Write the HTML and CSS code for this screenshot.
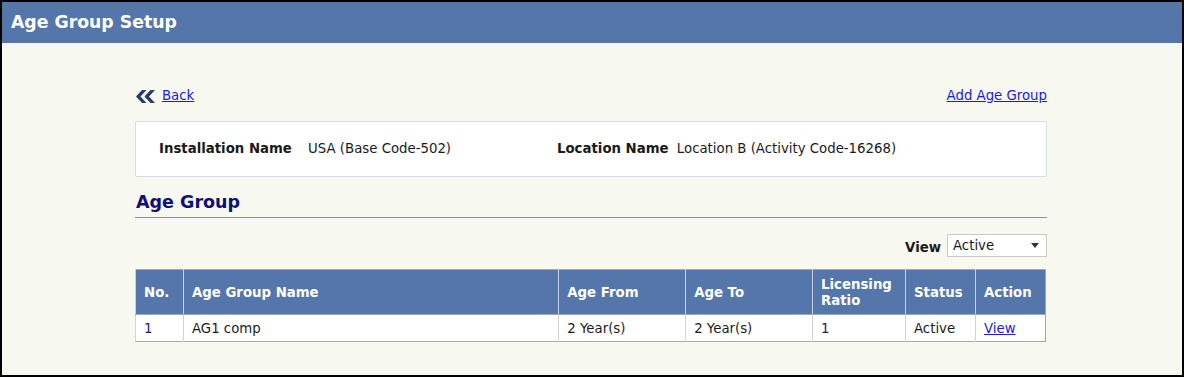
FILE: index.html
```html
<!DOCTYPE html>
<html lang="en">
<head>
  <meta charset="UTF-8" />
  <title>Age Group Setup</title>
  <link rel="stylesheet" href="styles.css">
</head>
<body>
  <div class="page">
    <div class="pageHeader">Age Group Setup</div>

    <div class="content">
      <div class="topLinks">
        <a href="#" class="backLink">
          <svg class="backIcon" width="20" height="13" viewBox="0 0 20 13">
            <polygon points="0,6.5 6,0 10.5,0 4.5,6.5 10.5,13 6,13" />
            <polygon points="8.5,6.5 14.5,0 19,0 13,6.5 19,13 14.5,13" />
          </svg>
          <span>Back</span>
        </a>
        <a href="#">Add Age Group</a>
      </div>

      <div class="infoBox">
        <div class="infoItem first">
          <span class="infoLabel">Installation Name</span>
          <span class="infoValue">USA (Base Code-502)</span>
        </div>
        <div class="infoItem">
          <span class="infoLabel">Location Name</span>
          <span class="infoValue">Location B (Activity Code-16268)</span>
        </div>
      </div>

      <h2 class="sectionTitle">Age Group</h2>

      <div class="filterRow">
        <label for="viewSelect">View</label>
        <div class="selectWrap">
          <select id="viewSelect">
            <option>Active</option>
            <option>Inactive</option>
            <option>All</option>
          </select>
        </div>
      </div>

      <table class="grid">
        <thead>
          <tr>
            <th class="colNo">No.</th>
            <th class="colName">Age Group Name</th>
            <th class="colFrom">Age From</th>
            <th class="colTo">Age To</th>
            <th class="colRatio">Licensing Ratio</th>
            <th class="colStatus">Status</th>
            <th class="colAction">Action</th>
          </tr>
        </thead>
        <tbody>
          <tr>
            <td class="num">1</td>
            <td>AG1 comp</td>
            <td>2 Year(s)</td>
            <td>2 Year(s)</td>
            <td class="num">1</td>
            <td>Active</td>
            <td><a href="#">View</a></td>
          </tr>
        </tbody>
      </table>
    </div>
  </div>
</body>
</html>
```

FILE: styles.css
```css
/* Basic Reset */
* {
  box-sizing: border-box;
  margin: 0;
  padding: 0;
}
body {
  font-family: "DejaVu Sans", Verdana, sans-serif;
  font-size: 13.3px;
  color: #1a1a1a;
  background-color: #fff;
}
.page {
  width: 1184px;
  height: 377px;
  border: 2px solid #000;
  background-color: #f7f8ef;
}
.pageHeader {
  height: 41px;
  line-height: 40px;
  padding-left: 9px;
  background-color: #5576aa;
  color: #fff;
  font-size: 17.3px;
  font-weight: bold;
}
.content {
  width: 912px;
  margin-left: 133px;
}
a {
  color: #1a1ae6;
}
.topLinks {
  display: flex;
  justify-content: space-between;
  align-items: flex-end;
  margin-top: 45px;
  line-height: 16px;
}
.backLink {
  display: flex;
  align-items: center;
  gap: 6px;
}
.backIcon {
  fill: #2b3a66;
  margin-left: 1px;
}
.infoBox {
  display: flex;
  margin-top: 17px;
  padding: 19px 23px;
  line-height: 16px;
  background-color: #fff;
  border: 1px solid #d5dceb;
  border-radius: 2px;
}
.infoItem.first {
  width: 398px;
}
.infoLabel {
  font-weight: bold;
  margin-right: 12px;
}
.infoItem + .infoItem .infoLabel {
  margin-right: 4px;
}
.sectionTitle {
  margin-top: 14px;
  padding-left: 1px;
  font-size: 17.5px;
  line-height: 23px;
  padding-bottom: 3px;
  color: #0f0f7a;
  border-bottom: 1px solid #8a8ab4;
}
.filterRow {
  display: flex;
  justify-content: flex-end;
  align-items: center;
  gap: 6px;
  margin-top: 16px;
}
.filterRow label {
  font-weight: bold;
  padding-top: 3px;
}
.selectWrap {
  position: relative;
}
.selectWrap::after {
  content: "";
  position: absolute;
  right: 8px;
  top: 9px;
  border-left: 4px solid transparent;
  border-right: 4px solid transparent;
  border-top: 5px solid #333;
  pointer-events: none;
}
.selectWrap select {
  appearance: none;
  -webkit-appearance: none;
  width: 100px;
  height: 23px;
  padding: 0 5px;
  font-family: inherit;
  font-size: 13.3px;
  color: #1a1a1a;
  background-color: #fff;
  border: 1px solid #c8c8c8;
  border-radius: 0;
}
.grid {
  width: 911px;
  margin-top: 12px;
  border-collapse: collapse;
  border: 1px solid #a6a6a6;
  background-color: #fff;
}
.grid th {
  height: 45px;
  padding: 1px 8px 0;
  text-align: left;
  line-height: 16px;
  color: #fff;
  background-color: #5576aa;
  border-left: 1px solid #c8d2e4;
  border-bottom: 1px solid #a6a6a6;
}
.grid td {
  height: 27px;
  padding: 0 8px;
  border-left: 1px solid #d2d2d2;
}
.grid td.num {
  color: #1c1c6c;
}
.colNo { width: 48px; }
.colName { width: 376px; }
.colFrom { width: 127px; }
.colTo { width: 127px; }
.colRatio { width: 93px; }
.colStatus { width: 70px; }
.colAction { width: 70px; }
```
